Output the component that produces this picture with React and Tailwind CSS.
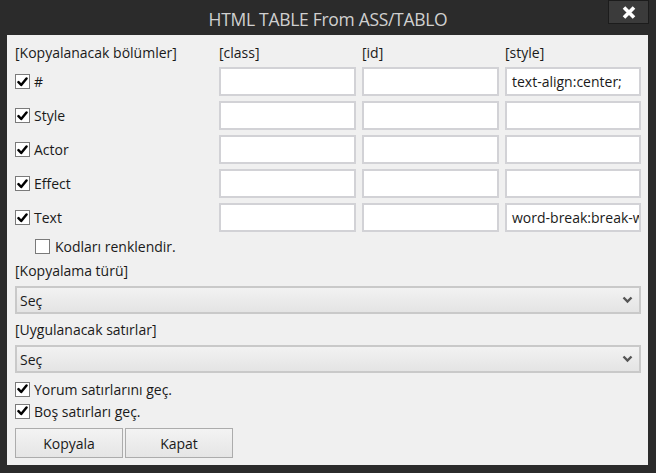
import { useState } from 'react'

const font = { fontFamily: '"Open Sans", "Noto Sans", sans-serif' }

function Check({ checked, onChange }) {
  return (
    <span
      onClick={onChange}
      className="w-[15px] h-[15px] shrink-0 bg-white border border-[#7a7a7a] flex items-center justify-center"
    >
      {checked && (
        <svg width="11" height="10" viewBox="0 0 11 10">
          <path d="M1.5 5.2 L4.2 8 L9.5 1.5" fill="none" stroke="#000" strokeWidth="2.5" strokeLinecap="round" strokeLinejoin="round" />
        </svg>
      )}
    </span>
  )
}

function Field({ value = '' }) {
  return (
    <div className="h-[29px] bg-white border-2 border-[#d2d2d6] flex items-center px-[5px] overflow-hidden whitespace-nowrap text-[14px] text-[#1a1a1a]">
      {value}
    </div>
  )
}

function Select() {
  return (
    <div className="h-[28px] border-2 border-[#c9c9c9] bg-gradient-to-b from-[#f2f2f2] to-[#e4e4e4] flex items-center justify-between pl-[3px] pr-[6px] text-[14px] text-[#1a1a1a]">
      <span>Seç</span>
      <svg width="11" height="8" viewBox="0 0 11 8">
        <path d="M1.5 1.5 L5.5 5.5 L9.5 1.5" fill="none" stroke="#555" strokeWidth="2.4" />
      </svg>
    </div>
  )
}

function App() {
  const [checks, setChecks] = useState({ '#': true, Style: true, Actor: true, Effect: true, Text: true, renk: false, yorum: true, bos: true })
  const toggle = (k) => setChecks({ ...checks, [k]: !checks[k] })

  const rows = [
    { name: '#', style: 'text-align:center;' },
    { name: 'Style', style: '' },
    { name: 'Actor', style: '' },
    { name: 'Effect', style: '' },
    { name: 'Text', style: 'word-break:break-word;' },
  ]

  return (
    <div className="w-[656px] h-[473px] bg-[#2b2b2b] flex flex-col" style={font}>

      {/* Title bar */}
      <div className="h-[35px] relative flex items-center justify-center">
        <span className="text-[17.5px] text-[#d0d0d0] tracking-[-0.3px] pt-[3px]">HTML TABLE From ASS/TABLO</span>
        <div className="absolute left-[608px] top-0 w-[41px] h-[24px] bg-[#3b3b3b] border border-[#1c1c1c] flex items-center justify-center">
          <svg width="14" height="13" viewBox="0 0 14 13">
            <path d="M2 1.5 L12 11.5 M12 1.5 L2 11.5" stroke="#fff" strokeWidth="3.6" />
          </svg>
        </div>
      </div>

      {/* Panel */}
      <div className="ml-[7px] w-[641px] h-[430px] bg-[#f0f0f0] pl-[8px] pr-[7px] pt-[8px] text-[14px] text-[#1a1a1a]">

        <div className="grid grid-cols-[198px_137px_137px_136px] gap-x-[6px] gap-y-[5px]">
          <div className="h-[19px] leading-[19px]">[Kopyalanacak bölümler]</div>
          <div className="h-[19px] leading-[19px]">[class]</div>
          <div className="h-[19px] leading-[19px]">[id]</div>
          <div className="h-[19px] leading-[19px]">[style]</div>

          {rows.map((r) => (
            <div key={r.name} className="contents">
              <div className="flex items-center gap-[4px]">
                <Check checked={checks[r.name]} onChange={() => toggle(r.name)} />
                <span>{r.name}</span>
              </div>
              <Field />
              <Field />
              <Field value={r.style} />
            </div>
          ))}
        </div>

        <div className="flex items-center gap-[5px] pl-[20px] mt-[4px] h-[20px]">
          <Check checked={checks.renk} onChange={() => toggle('renk')} />
          <span>Kodları renklendir.</span>
        </div>

        <div className="mt-[5px] h-[20px] leading-[20px]">[Kopyalama türü]</div>
        <div className="mt-[5px]">
          <Select />
        </div>

        <div className="mt-[6px] h-[20px] leading-[20px]">[Uygulanacak satırlar]</div>
        <div className="mt-[5px]">
          <Select />
        </div>

        <div className="flex items-center gap-[4px] mt-[6px] h-[20px]">
          <Check checked={checks.yorum} onChange={() => toggle('yorum')} />
          <span>Yorum satırlarını geç.</span>
        </div>
        <div className="flex items-center gap-[4px] mt-[2px] h-[20px]">
          <Check checked={checks.bos} onChange={() => toggle('bos')} />
          <span>Boş satırları geç.</span>
        </div>

        <div className="flex gap-[2px] mt-[7px]">
          <button className="w-[108px] h-[30px] border border-[#acacac] bg-gradient-to-b from-[#f3f3f3] to-[#e5e5e5] text-[14px] text-[#1a1a1a]">Kopyala</button>
          <button className="w-[108px] h-[30px] border border-[#acacac] bg-gradient-to-b from-[#f3f3f3] to-[#e5e5e5] text-[14px] text-[#1a1a1a]">Kapat</button>
        </div>
      </div>
    </div>
  )
}

export default App
